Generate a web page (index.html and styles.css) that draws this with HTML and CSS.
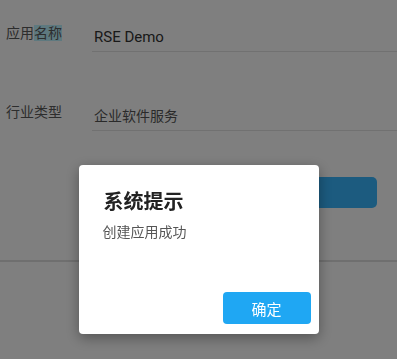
FILE: index.html
```html
<!DOCTYPE html>
<html lang="zh-CN">
<head>
    <meta charset="UTF-8">
    <meta name="viewport" content="width=device-width, initial-scale=1.0">
    <title>创建应用</title>
    <link rel="stylesheet" href="styles.css">
</head>
<body>

    <!-- Create app form -->
    <div class="page">
        <div class="row">
            <label class="row-label">应用<span class="selected">名称</span></label>
            <div class="field">RSE Demo</div>
        </div>

        <div class="row">
            <label class="row-label">行业类型</label>
            <div class="field field-select">企业软件服务</div>
        </div>

        <div class="actions">
            <button class="submit">创建应用</button>
        </div>

        <div class="divider"></div>
    </div>

    <!-- Alert dialog -->
    <div class="mask">
        <div class="dialog">
            <h2 class="dialog-title">系统提示</h2>
            <p class="dialog-message">创建应用成功</p>
            <div class="dialog-footer">
                <button class="dialog-btn">确定</button>
            </div>
        </div>
    </div>

</body>
</html>
```

FILE: styles.css
```css
body, html {
    margin: 0;
    padding: 0;
    height: 100%;
    background-color: #fff;
    font-family: Roboto, "Noto Sans CJK SC", sans-serif;
}

.page {
    padding-top: 23px;
}

.row {
    display: flex;
    margin-bottom: 50px;
}

.row-label {
    width: 86px;
    padding-left: 6px;
    font-size: 14px;
    line-height: 20px;
    color: #5a5a5a;
}

.selected {
    background-color: #bcf2ff;
}

.field {
    flex: 1;
    margin-top: 4px;
    padding: 0 0 4px 2px;
    font-size: 15px;
    line-height: 20px;
    color: #333;
    border-bottom: 1px solid #e2e2e2;
}

.field-select {
    font-size: 14px;
    color: #555;
}

.actions {
    display: flex;
    margin: -4px 20px 0 92px;
}

.submit {
    flex: 1;
    height: 31px;
    border: none;
    border-radius: 5px;
    background-color: #38b6ff;
    color: white;
    font-size: 15px;
    font-family: inherit;
}

.divider {
    margin-top: 52px;
    height: 2px;
    background-color: #dedede;
}

.mask {
    position: fixed;
    top: 0;
    left: 0;
    right: 0;
    bottom: 0;
    background-color: rgba(0, 0, 0, 0.5);
    display: flex;
    justify-content: center;
    align-items: flex-start;
    padding-top: 165px;
}

.dialog {
    width: 240px;
    height: 169px;
    box-sizing: border-box;
    padding: 23px 8px 10px 25px;
    background-color: white;
    border-radius: 4px;
    box-shadow: 0 4px 14px rgba(0, 0, 0, 0.35);
    display: flex;
    flex-direction: column;
}

.dialog-title {
    margin: 0;
    font-size: 20px;
    line-height: 28px;
    font-weight: 700;
    color: #222;
}

.dialog-message {
    margin: 6px 0 0 -1px;
    font-size: 14px;
    line-height: 20px;
    color: #555;
}

.dialog-footer {
    margin-top: auto;
    display: flex;
    justify-content: flex-end;
}

.dialog-btn {
    width: 88px;
    height: 32px;
    border: none;
    border-radius: 4px;
    background-color: #1fa7f3;
    color: white;
    font-size: 15px;
    font-family: inherit;
}
```
